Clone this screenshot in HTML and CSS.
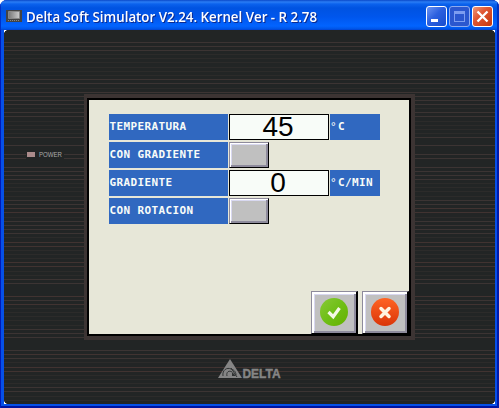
FILE: index.html
```html
<!DOCTYPE html>
<html lang="es">
<head>
<meta charset="utf-8">
<title>Delta Soft Simulator</title>
<link rel="stylesheet" href="styles.css">
</head>
<body>
<div class="window">
  <header class="titlebar">
    <svg class="app-icon" width="16" height="12" viewBox="0 0 16 12"><defs><linearGradient id="lcd"><stop stop-color="#777"/><stop offset="1" stop-color="#ccc"/></linearGradient></defs><path fill="#444" d="M0 0h16v12H0z"/><path fill="url(#lcd)" stroke="#888" d="M2.500 1.500h11v7h-11z"/><path stroke="#888" stroke-dasharray="1 1" d="M2 10.500h12"/></svg>
    <h1 class="title"><svg width="300" height="24"><text x="1" y="17" textLength="291" lengthAdjust="spacingAndGlyphs">Delta Soft Simulator V2.24. Kernel Ver - R 2.78</text></svg></h1>
    <div class="controls">
      <button class="control" aria-label="Minimize"><svg width="19" height="19"><path fill="#fff" d="M4 12h7v3H4z"/></svg></button>
      <button class="control disabled" aria-label="Maximize"><svg width="19" height="19"><path fill="#7d9df0" fill-rule="evenodd" d="M4 4h11v11H4zM5 7v7h9V7z"/></svg></button>
      <button class="control close" aria-label="Close"><svg width="19" height="19"><path stroke="#fff" stroke-width="2.300" d="M4.500 4.500l10 10m0-10l-10 10"/></svg></button>
    </div>
  </header>
  <main class="device">
    <svg class="grooves" width="491" height="374" viewBox="4 30 491 374" shape-rendering="crispEdges">
      <path stroke="#3c3433" d="M4 42.500h491M4 46.500h491M4 50.500h491M4 79.500h491M4 83.500h491M4 92.500h491M4 96.500h491M4 100.500h491M4 104.500h491M4 112.500h491M4 116.500h491M4 137.500h491M4 145.500h491M4 154.500h491M4 158.500h491M4 167.500h491M4 171.500h491M4 175.500h491M4 179.500h491M4 200.500h491M4 204.500h491M4 221.500h491M4 225.500h491M4 229.500h491M4 233.500h491M4 279.500h491M4 283.500h491M4 300.500h491M4 329.500h491M4 333.500h491M4 337.500h491M4 350.500h491M4 358.500h491M4 387.500h491M4 391.500h491"/>
      <path stroke="#413331" d="M4 208.500h491M4 212.500h491M4 242.500h491M4 246.500h491M4 262.500h491M4 266.500h491M4 296.500h491M4 304.500h491M4 354.500h491M4 367.500h491M4 371.500h491"/>
      <path stroke="#2c2b2a" d="M4 54.500h491M4 58.500h491M4 62.500h491M4 67.500h491M4 71.500h491M4 75.500h491M4 88.500h491M4 108.500h491M4 121.500h491M4 125.500h491M4 129.500h491M4 133.500h491M4 183.500h491M4 187.500h491M4 191.500h491M4 196.500h491M4 217.500h491M4 237.500h491M4 250.500h491M4 254.500h491M4 258.500h491M4 271.500h491M4 275.500h491M4 308.500h491M4 312.500h491M4 316.500h491M4 320.500h491M4 325.500h491M4 362.500h491M4 375.500h491M4 379.500h491M4 383.500h491M4 396.500h491M4 400.500h491"/>
    </svg>
    <div class="power"><svg width="38" height="9"><path fill="#222525" d="M0 0h38v9H0z"/><path fill="#aa8b8b" d="M1 2h8v5H1z"/><text x="13" y="7.300" textLength="23" lengthAdjust="spacingAndGlyphs">POWER</text></svg></div>
    <div class="bezel">
      <div class="screen">
        <div class="row"><div class="label">TEMPERATURA</div><div class="value"><span>45</span></div><div class="unit"><i>°</i>C</div></div>
        <div class="row"><div class="label">CON GRADIENTE</div><button class="key toggle" aria-label="Con gradiente"></button></div>
        <div class="row"><div class="label">GRADIENTE</div><div class="value"><span>0</span></div><div class="unit"><i>°</i>C/MIN</div></div>
        <div class="row"><div class="label">CON ROTACION</div><button class="key toggle" aria-label="Con rotacion"></button></div>
        <div class="actions">
          <button class="key action" aria-label="OK"><svg width="28" height="28"><defs><linearGradient id="ok" x2="1" y2="1"><stop stop-color="#88c936"/><stop offset=".5" stop-color="#6fbf16"/><stop offset="1" stop-color="#65b000"/></linearGradient></defs><circle cx="14" cy="14" r="14" fill="url(#ok)"/><path fill="none" stroke="#f5f8e5" stroke-width="3.200" d="M8.500 14l4.700 4.700 6.300-8.700"/></svg></button>
          <button class="key action" aria-label="Cancel"><svg width="28" height="28"><defs><linearGradient id="no" x2="0" y2="1"><stop stop-color="#ff6424"/><stop offset="1" stop-color="#da3508"/></linearGradient></defs><circle cx="14" cy="14" r="14" fill="url(#no)"/><path stroke="#fff3df" stroke-width="3.500" stroke-linecap="round" d="M10 10.500l8 8m0-8l-8 8"/></svg></button>
        </div>
      </div>
    </div>
    <div class="brand"><svg width="66" height="21" viewBox="0 0 66 21"><path fill="#858585" d="M12 0l12 19H0z"/><path fill="none" stroke="#303333" d="M5 17c-1-6 4-9 8-7 4 1 5 4 5 6M9 17c-1-4 2-6 5-4M13 9l6 9"/><path fill="#303333" d="M14 13l4 4h-4z"/><text x="24.500" y="18.500" textLength="38" lengthAdjust="spacingAndGlyphs">DELTA</text></svg></div>
    <i class="corner tl"></i><i class="corner tr"></i><i class="corner bl"></i><i class="corner br"></i>
  </main>
</div>
</body>
</html>
```

FILE: styles.css
```css
* { box-sizing: border-box; }
body { margin: 0; background: #fff; overflow: hidden; }
button { padding: 0; margin: 0; font: inherit; }
svg { display: block; }
.window {
  width: 499px;
  height: 408px;
  padding: 0 4px 4px;
  border-radius: 7px 7px 0 0;
  overflow: hidden;
  background: #0650e8;
  box-shadow: inset 1px 0 #0019b8, inset -2px 0 #0019a8, inset 0 -2px #0013a0;
}
.titlebar {
  display: flex;
  height: 30px;
  margin: 0 -4px;
  padding: 0 6px;
  background: linear-gradient(#0a48c8 0, #2a7df5 2px, #0b62ed 4px, #0053e1 8px, #0056ed 17px, #0264ff 26px, #0054e5 29px, #003fd0);
  box-shadow: inset 1px 0 #0030c8, inset -2px 0 #0030c0;
}
.app-icon { margin-top: 10px; }
.title { flex: 1; margin: 5px 0 0 3px; }
.title svg { overflow: visible; }
.title text { font: 600 13.500px "Open Sans", sans-serif; fill: #fff; filter: drop-shadow(1px 1px 0 #0b2a91); }
.controls { display: flex; gap: 2px; padding-top: 6px; }
.control {
  width: 21px;
  height: 21px;
  border: 1px solid #fff;
  border-radius: 3px;
  background: linear-gradient(135deg, #6c94f3, #2c60df 45%, #174dce);
}
.control.disabled { border-color: #8eabef; background: #2b57cf; }
.control.close { background: linear-gradient(135deg, #ef9879, #df5633 40%, #c4370d); }
.device {
  position: relative;
  display: flex;
  flex-direction: column;
  align-items: center;
  width: 491px;
  height: 374px;
  padding-top: 64px;
  background: #222525;
}
.grooves { position: absolute; inset: 0; }
.power { position: absolute; left: 22px; top: 120px; }
.power text { font: 6.500px "Liberation Sans", sans-serif; fill: #aaa; }
.bezel {
  position: relative;
  width: 331px;
  height: 246px;
  padding: 4px 4px 4px 3px;
  background: #3c3433;
}
.screen {
  display: flex;
  flex-direction: column;
  gap: 2px;
  width: 324px;
  height: 238px;
  border: 2px solid #000;
  padding: 14px 0 0 20px;
  background: #e7e7d8;
}
.row { display: flex; gap: 1px; height: 26px; }
.label, .unit {
  background: #3068c0;
  color: #f8fcf8;
  font: 700 11px/26px "DejaVu Sans Mono", monospace;
  letter-spacing: 0.380px;
  white-space: pre;
}
.label { width: 119px; padding-left: 0.500px; }
.unit { width: 50px; }
.unit i { display: inline-block; width: 8px; font-style: normal; font-weight: 400; }
.value {
  width: 100px;
  border: 1px solid #000;
  padding-right: 2px;
  background: #f8fcf8;
  color: #000;
  font: 28px/24px "Liberation Sans", sans-serif;
  text-align: center;
}
.key {
  border: 1px solid;
  border-color: #8e8b9c #000 #000 #8e8b9c;
  background: #c0c0c0;
}
.toggle {
  width: 40px;
  height: 26px;
  box-shadow: inset 1px 1px #fff, inset -2px -2px #8e8b9c, inset 2px 2px #d8d8f0;
}
.actions {
  display: flex;
  gap: 4px;
  align-self: flex-end;
  margin-top: auto;
}
.action {
  display: grid;
  place-items: center;
  width: 47px;
  height: 43px;
  padding-right: 1px;
  padding-bottom: 1px;
  border-right-width: 2px;
  box-shadow: inset 2px 2px #fff, inset -2px -2px #8e8b9c, inset 3px 3px #d8d8f0;
}
.brand { position: relative; margin: 19px 0 0 2px; }
.brand text { font: 700 12px "Liberation Sans", sans-serif; fill: #858585; stroke: #858585; stroke-width: 0.400px; }
.corner { position: absolute; width: 5px; height: 5px; }
.tl { left: 0; top: 0; background: radial-gradient(circle at 100% 100%, transparent 5px, #fff 5.500px); }
.tr { right: 0; top: 0; background: radial-gradient(circle at 0 100%, transparent 5px, #fff 5.500px); }
.bl { left: 0; bottom: 0; background: radial-gradient(circle at 100% 0, transparent 5px, #fff 5.500px); }
.br { right: 0; bottom: 0; background: radial-gradient(circle at 0 0, transparent 5px, #fff 5.500px); }
```
